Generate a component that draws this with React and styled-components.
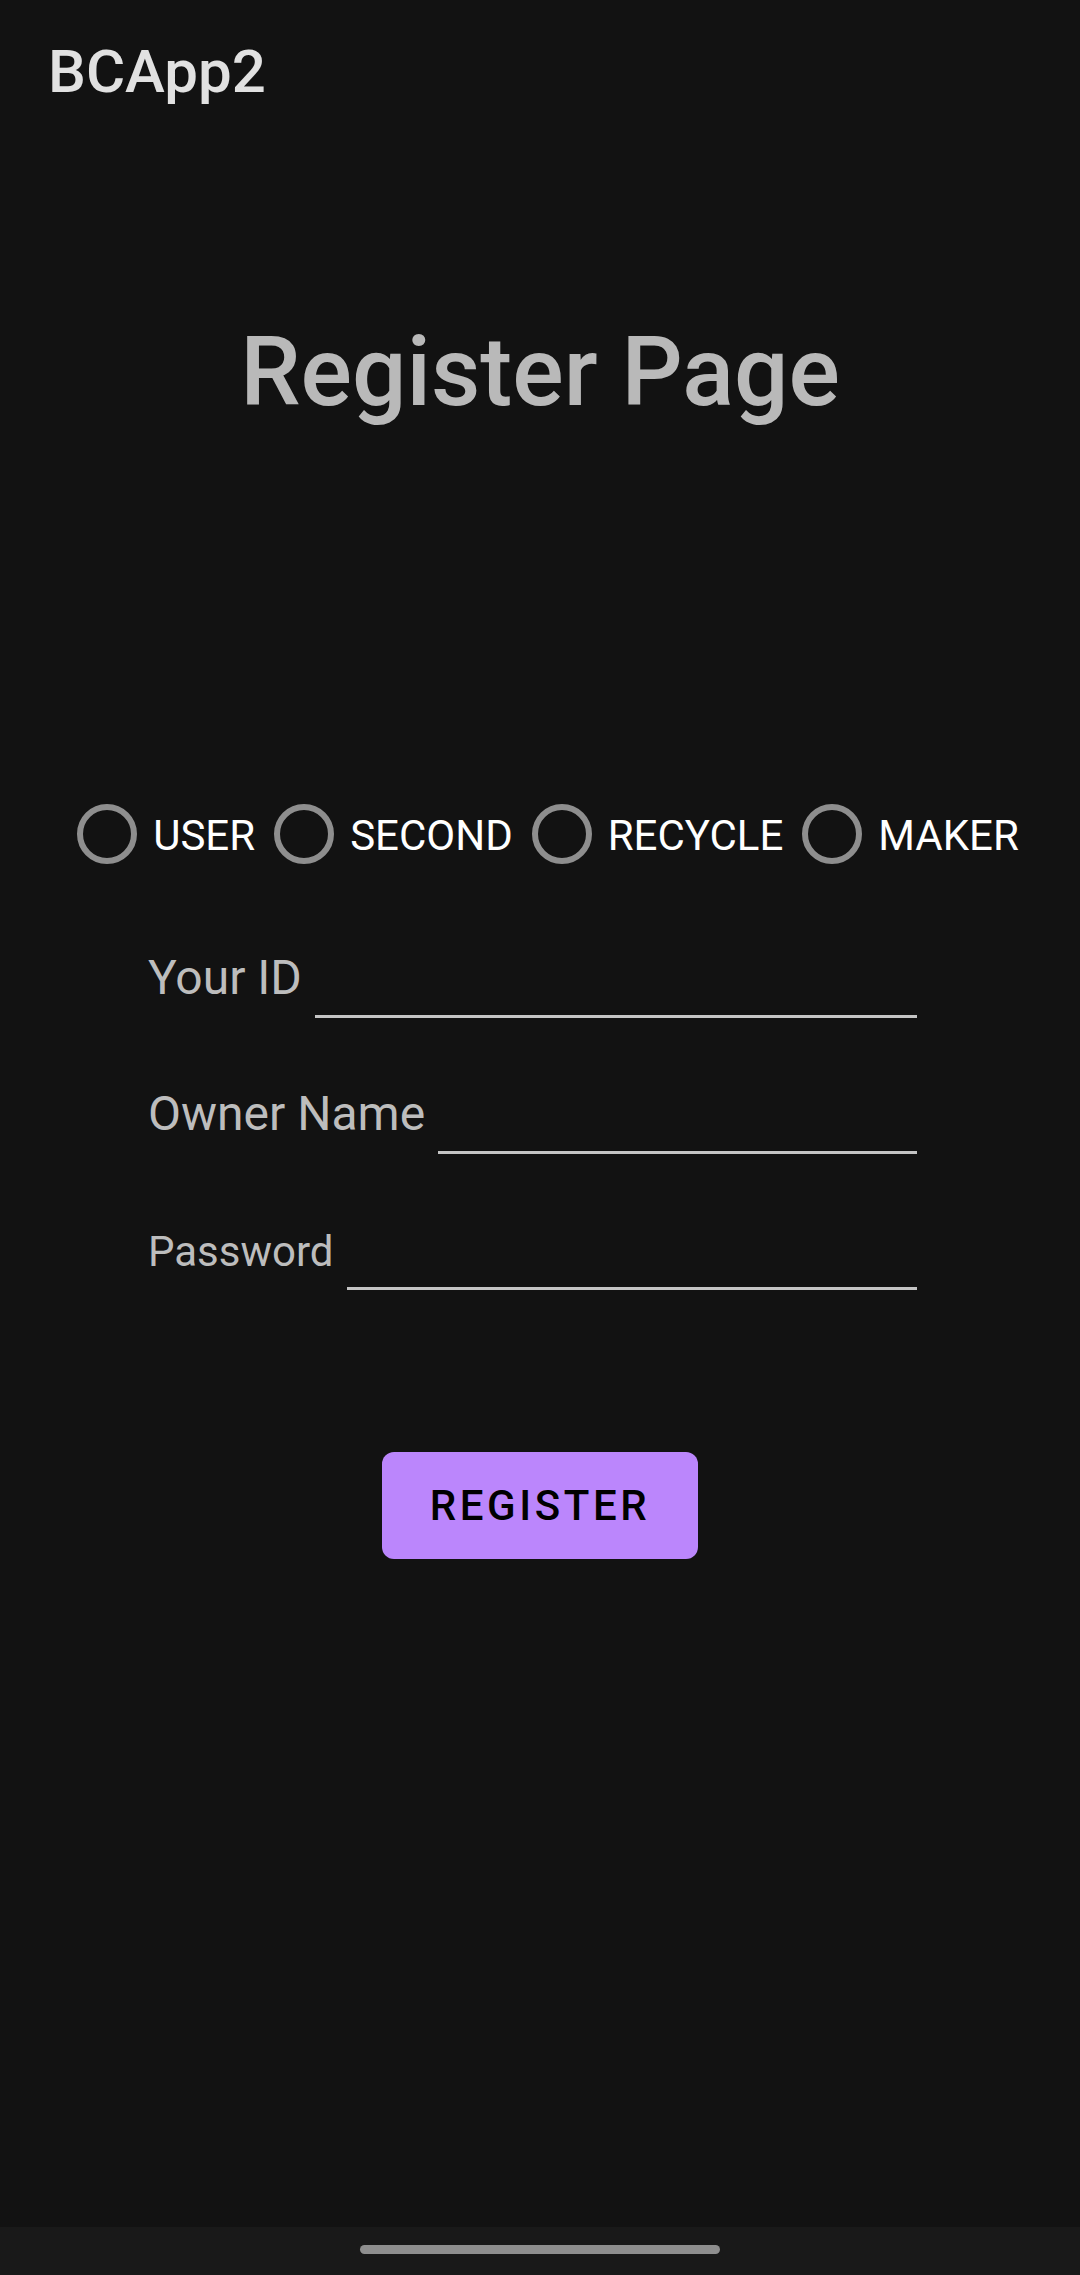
import React, { useState } from 'react';
import styled, { createGlobalStyle } from 'styled-components';

const GlobalStyle = createGlobalStyle`
  html, body {
    margin: 0;
    padding: 0;
    background-color: #121212;
  }
  body {
    font-family: Roboto, "Liberation Sans", sans-serif;
  }
`;

const ROLES = ['USER', 'SECOND', 'RECYCLE', 'MAKER'];

const FIELDS = [
  { label: 'Your ID', size: 48, bottom: 16, type: 'text' },
  { label: 'Owner Name', size: 48, bottom: 16, type: 'text' },
  { label: 'Password', size: 42, bottom: 14, type: 'password' },
];

const App = () => {
  const [role, setRole] = useState(null);

  return (
    <Screen>
      <GlobalStyle />
      <Toolbar>
        <AppTitle>BCApp2</AppTitle>
      </Toolbar>

      <Content>
        <PageTitle>Register Page</PageTitle>

        <RadioGroup>
          {ROLES.map((r) => (
            <RadioItem key={r} onClick={() => setRole(r)}>
              <RadioCircle checked={role === r} />
              <RadioLabel>{r}</RadioLabel>
            </RadioItem>
          ))}
        </RadioGroup>

        <Form>
          {FIELDS.map((f) => (
            <FieldRow key={f.label}>
              <FieldLabel size={f.size} bottom={f.bottom}>
                {f.label}
              </FieldLabel>
              <FieldInput type={f.type} />
            </FieldRow>
          ))}
        </Form>

        <RegisterButton>REGISTER</RegisterButton>
      </Content>

      <NavBar>
        <NavHandle />
      </NavBar>
    </Screen>
  );
};

const Screen = styled.div`
  width: 1080px;
  height: 2275px;
  display: flex;
  flex-direction: column;
  background-color: #121212;
  overflow: hidden;
`;

const Toolbar = styled.div`
  height: 144px;
  display: flex;
  align-items: center;
  padding-left: 48px;
`;

const AppTitle = styled.h1`
  margin: 0;
  font-size: 60px;
  line-height: 60px;
  font-weight: 500;
  color: #e1e1e1;
`;

const Content = styled.main`
  flex: 1;
  display: flex;
  flex-direction: column;
  align-items: center;
`;

const PageTitle = styled.h2`
  margin: 180px 0 0;
  font-size: 96px;
  line-height: 96px;
  font-weight: 500;
  color: #b9b9b9;
`;

const RadioGroup = styled.div`
  margin: 384px 0 0 16px;
  display: flex;
  gap: 19px;
`;

const RadioItem = styled.label`
  display: flex;
  align-items: center;
  gap: 16px;
  height: 60px;
  cursor: pointer;
`;

const RadioCircle = styled.span`
  box-sizing: border-box;
  width: 60px;
  height: 60px;
  border-radius: 50%;
  border: 6px solid ${(p) => (p.checked ? '#bb86fc' : '#8e8e8e')};
  display: flex;
  align-items: center;
  justify-content: center;

  &::after {
    content: '';
    width: 24px;
    height: 24px;
    border-radius: 50%;
    background-color: #bb86fc;
    display: ${(p) => (p.checked ? 'block' : 'none')};
  }
`;

const RadioLabel = styled.span`
  font-size: 42px;
  line-height: 60px;
  padding-top: 3px;
  color: #ffffff;
`;

const Form = styled.div`
  margin-top: 84px;
  width: 769px;
  margin-left: -15px;
  display: flex;
  flex-direction: column;
  gap: 66px;
`;

const FieldRow = styled.div`
  height: 70px;
  display: flex;
  align-items: flex-end;
  gap: 13px;
`;

const FieldLabel = styled.span`
  font-size: ${(p) => p.size}px;
  line-height: 48px;
  margin-bottom: ${(p) => p.bottom}px;
  color: #bdbdbd;
  white-space: nowrap;
`;

const FieldInput = styled.input`
  flex: 1;
  min-width: 0;
  height: 50px;
  box-sizing: border-box;
  background: transparent;
  border: none;
  border-bottom: 3px solid #c4c4c4;
  outline: none;
  padding: 0;
  color: #e0e0e0;
  font-family: inherit;
  font-size: 48px;
`;

const RegisterButton = styled.button`
  margin-top: 162px;
  height: 107px;
  padding: 0 48px;
  border: none;
  border-radius: 12px;
  background-color: #bb86fc;
  color: #000000;
  font-family: inherit;
  font-size: 42px;
  font-weight: 500;
  letter-spacing: 3.6px;
  cursor: pointer;
`;

const NavBar = styled.div`
  height: 48px;
  background-color: #191919;
  display: flex;
  justify-content: center;
  padding-top: 18px;
  box-sizing: border-box;
`;

const NavHandle = styled.div`
  width: 360px;
  height: 9px;
  border-radius: 5px;
  background-color: #8e8e8e;
`;

export default App;
